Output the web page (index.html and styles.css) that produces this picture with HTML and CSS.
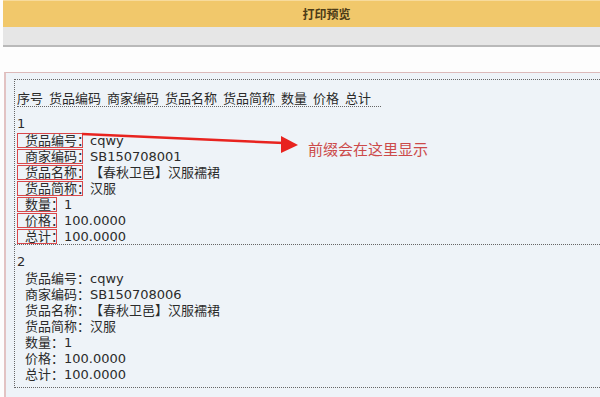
FILE: index.html
```html
<!DOCTYPE html>
<html lang="zh-CN">
<head>
    <meta charset="UTF-8">
    <meta name="viewport" content="width=device-width, initial-scale=1.0">
    <title>打印预览</title>
    <link rel="stylesheet" href="styles.css">
</head>
<body>
    <div class="titlebar">打印预览</div>
    <div class="toolbar"></div>

    <div class="sheet">
        <div class="print">
            <div class="head">
                <span>序号</span><span>货品编码</span><span>商家编码</span><span>货品名称</span><span>货品简称</span><span>数量</span><span>价格</span><span>总计</span>
            </div>

            <div class="rec">
                <div class="idx">1</div>
                <div class="field"><span class="lbl mark">货品编号：</span>cqwy</div>
                <div class="field"><span class="lbl mark">商家编码：</span>SB150708001</div>
                <div class="field"><span class="lbl mark">货品名称：</span>【春秋卫邑】汉服襦裙</div>
                <div class="field"><span class="lbl mark">货品简称：</span>汉服</div>
                <div class="field"><span class="lbl mark">数量：</span>1</div>
                <div class="field"><span class="lbl mark">价格：</span>100.0000</div>
                <div class="field"><span class="lbl mark">总计：</span>100.0000</div>
            </div>

            <div class="rec last">
                <div class="idx">2</div>
                <div class="field"><span class="lbl">货品编号：</span>cqwy</div>
                <div class="field"><span class="lbl">商家编码：</span>SB150708006</div>
                <div class="field"><span class="lbl">货品名称：</span>【春秋卫邑】汉服襦裙</div>
                <div class="field"><span class="lbl">货品简称：</span>汉服</div>
                <div class="field"><span class="lbl">数量：</span>1</div>
                <div class="field"><span class="lbl">价格：</span>100.0000</div>
                <div class="field"><span class="lbl">总计：</span>100.0000</div>
            </div>
        </div>
    </div>

    <!-- 标注：箭头和说明文字 -->
    <svg class="arrow" width="600" height="397" viewBox="0 0 600 397">
        <line x1="82" y1="134" x2="284" y2="143" stroke="#e8231f" stroke-width="2.5"/>
        <polygon points="281,136 298,145 281,153" fill="#e8231f"/>
    </svg>
    <div class="note">前缀会在这里显示</div>
</body>
</html>
```

FILE: styles.css
```css
body {
    margin: 0;
    background-color: #fdfdfd;
    font-family: "DejaVu Sans", "Noto Sans CJK SC", sans-serif;
    color: #2b2b2b;
    overflow: hidden;
    height: 397px;
}
.titlebar {
    margin-left: 3px;
    height: 26px;
    line-height: 26px;
    border-top: 1px solid #f7db9c;
    background-color: #f1c86b;
    color: #4d3c17;
    font-family: "Noto Sans CJK SC", sans-serif;
    font-size: 12px;
    font-weight: bold;
    text-align: center;
    padding-left: 50px;
}
.toolbar {
    margin-left: 3px;
    height: 18px;
    background-color: #e6e6e6;
    border-bottom: 2px solid #b9b9b9;
}
.sheet {
    margin: 25px 0 0 4px;
    padding: 6px 0 0 8px;
    border-top: 1px solid #dcb9b9;
    border-left: 2px solid #e2c3c3;
    background-color: #eef3f8;
    height: 400px;
}
.print {
    border-top: 1px dotted #666;
    border-left: 1px dotted #666;
    padding: 10px 0 0 2px;
    font-size: 13px;
    line-height: 16px;
}
.head {
    display: inline-block;
    height: 16px;
    padding-right: 10px;
    border-bottom: 1px dotted #666;
    margin-bottom: 9px;
    font-family: "Noto Sans CJK SC", sans-serif;
}
.head span {
    margin-right: 6px;
}
.head span:last-child {
    margin-right: 0;
}
.rec {
    border-bottom: 1px dotted #666;
    margin-left: -2px;
    padding-left: 2px;
}
.rec.last {
    margin-top: 9px;
    padding-bottom: 5px;
}
.idx, .field {
    height: 16px;
    white-space: nowrap;
}
.field {
    padding-left: 8px;
}
.lbl {
    font-family: "Noto Sans CJK SC", sans-serif;
    display: inline-block;
    line-height: 16px;
}
.mark {
    position: relative;
}
.mark::after {
    content: '';
    position: absolute;
    left: -8px;
    right: 7px;
    top: 1px;
    bottom: 0;
    border: 1.5px solid #d9474a;
}
.arrow {
    position: absolute;
    top: 0;
    left: 0;
    pointer-events: none;
}
.note {
    position: absolute;
    left: 308px;
    top: 139px;
    font-family: "Noto Sans CJK SC", sans-serif;
    font-size: 15px;
    line-height: 20px;
    color: #cc4a4a;
}
```
